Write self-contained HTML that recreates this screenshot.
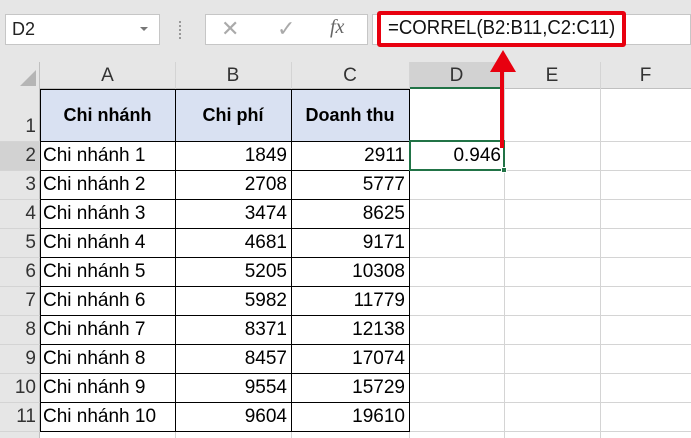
<!DOCTYPE html><html><head><style>
body{margin:0;width:691px;height:438px;overflow:hidden;background:#fff;font-family:"Liberation Sans",Calibri,sans-serif;position:relative}
.a{position:absolute;box-sizing:border-box}
.cell{position:absolute;box-sizing:border-box;font-size:19px;line-height:29px;white-space:nowrap;color:#000}
</style></head><body>
<div class="a" style="left:0;top:0;width:691px;height:62px;background:#e6e6e6"></div>
<div class="a" style="left:5px;top:14px;width:155px;height:31px;background:#fff;border:1px solid #c6c6c6"></div>
<div class="cell" style="left:12px;top:15px;font-size:18px;color:#222">D2</div>
<div class="a" style="left:140px;top:27px;width:0;height:0;border-left:4px solid transparent;border-right:4px solid transparent;border-top:4px solid #777"></div>
<div class="a" style="left:179px;top:21px;width:2px;height:18px;border-left:2px dotted #999"></div>
<div class="a" style="left:205px;top:14px;width:163px;height:31px;background:#fff;border:1px solid #c6c6c6"></div>
<div class="cell" style="left:221px;top:14px;color:#aaa;font-size:22px">✕</div>
<div class="cell" style="left:277px;top:14px;color:#aaa;font-size:22px">✓</div>
<div class="cell" style="left:330px;top:13px;color:#666;font-family:'Liberation Serif',serif;font-style:italic;font-size:20px">fx</div>
<div class="a" style="left:372px;top:14px;width:319px;height:31px;background:#fff;border:1px solid #c6c6c6"></div>
<div class="a" style="left:377px;top:11px;width:249px;height:36px;border:4px solid #e8000f;border-radius:3px"></div>
<div class="cell" style="left:388px;top:14px;font-size:20px;color:#111;transform:scaleX(0.93);transform-origin:0 0">=CORREL(B2:B11,C2:C11)</div>
<div class="a" style="left:0;top:62px;width:691px;height:27px;background:#e6e6e6;border-bottom:1px solid #c0c0c0"></div>
<div class="a" style="left:0;top:62px;width:40px;height:376px;background:#e6e6e6;border-right:1px solid #c0c0c0"></div>
<div class="a" style="left:20px;top:70px;width:0;height:0;border-left:16px solid transparent;border-bottom:16px solid #b5b5b5"></div>
<div class="a" style="left:409px;top:62px;width:95px;height:27px;background:#d2d2d2;border-bottom:2px solid #217346"></div>
<div class="a" style="left:0;top:141px;width:40px;height:29px;background:#d2d2d2"></div>
<div id="g"></div>
<script>
var cols=[40,175,291,409,504,600,691],L=['A','B','C','D','E','F'],h='';
for(var i=0;i<6;i++){h+='<div class="cell" style="left:'+cols[i]+'px;top:61px;width:'+(cols[i+1]-cols[i])+'px;text-align:center;color:#333">'+L[i]+'</div>';
h+='<div class="a" style="left:'+cols[i+1]+'px;top:62px;width:1px;height:376px;background:#d4d4d4"></div>';}
var rows=[89,141];for(var r=1;r<=10;r++)rows.push(141+29*r);
for(var r=0;r<11;r++){h+='<div class="a" style="left:0;top:'+rows[r+1]+'px;width:691px;height:1px;background:#d4d4d4"></div>';
h+='<div class="cell" style="left:0;top:'+(rows[r+1]-29)+'px;width:36px;text-align:right;color:#333">'+(r+1)+'</div>';}
h+='<div class="a" style="left:40px;top:89px;width:369px;height:52px;background:#d9e1f2"></div>';
var hd=['Chi nhánh','Chi phí','Doanh thu'];
for(var i=0;i<3;i++)h+='<div class="cell" style="left:'+cols[i]+'px;top:101px;width:'+(cols[i+1]-cols[i])+'px;text-align:center;font-weight:bold;font-size:18px">'+hd[i]+'</div>';
var d=[[1849,2911],[2708,5777],[3474,8625],[4681,9171],[5205,10308],[5982,11779],[8371,12138],[8457,17074],[9554,15729],[9604,19610]];
for(var r=0;r<10;r++){var y=141+29*r;
h+='<div class="cell" style="left:43px;top:'+y+'px">Chi nhánh '+(r+1)+'</div>';
h+='<div class="cell" style="left:175px;top:'+y+'px;width:112px;text-align:right">'+d[r][0]+'</div>';
h+='<div class="cell" style="left:291px;top:'+y+'px;width:114px;text-align:right">'+d[r][1]+'</div>';}
for(var i=0;i<4;i++)h+='<div class="a" style="left:'+cols[i]+'px;top:89px;width:1px;height:343px;background:#000"></div>';
for(var r=1;r<12;r++)h+='<div class="a" style="left:40px;top:'+rows[r]+'px;width:370px;height:1px;background:#000"></div>';
h+='<div class="a" style="left:40px;top:89px;width:370px;height:1px;background:#000"></div>';
document.getElementById('g').innerHTML=h;
</script>
<div class="a" style="left:409px;top:140px;width:96px;height:31px;border:2px solid #217346"></div>
<div class="cell" style="left:409px;top:141px;width:92px;text-align:right">0.946</div>
<div class="a" style="left:501px;top:167px;width:6px;height:6px;background:#217346;border:1px solid #fff"></div>
<div class="a" style="left:500px;top:68px;width:4px;height:80px;background:#e8000f"></div>
<div class="a" style="left:490px;top:50px;width:0;height:0;border-left:13px solid transparent;border-right:13px solid transparent;border-bottom:22px solid #e8000f"></div>
</body></html>
